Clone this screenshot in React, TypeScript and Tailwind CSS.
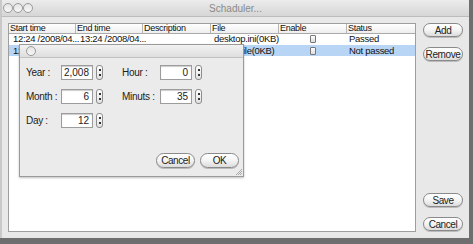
import React from "react";

const font = { fontFamily: '"Liberation Sans", Arial, sans-serif' };

function Pill({ label, className = "" }: { label: string; className?: string }) {
  return (
    <div
      className={`flex items-center justify-center whitespace-nowrap rounded-full border border-[#8a8a8a] bg-gradient-to-b from-white via-[#f4f4f4] to-[#dcdcdc] text-[10px] tracking-[-0.4px] text-[#222] shadow-[0_1px_0_#bbb] ${className}`}
    >
      {label}
    </div>
  );
}

function Light() {
  return (
    <div className="h-[10px] w-[10px] rounded-full border border-[#9a9a9a] bg-gradient-to-b from-[#e4e4e4] to-[#f8f8f8]" />
  );
}

function Spinner() {
  return (
    <div className="flex h-[15px] w-[7px] flex-col items-center justify-center gap-[3px] rounded-[3px] border border-[#8c8c8c] bg-gradient-to-b from-white to-[#e2e2e2]">
      <div className="h-[2px] w-[2px] bg-[#333]" />
      <div className="h-[2px] w-[2px] bg-[#333]" />
    </div>
  );
}

function Field({ label, value, labelW }: { label: string; value: string; labelW: string }) {
  return (
    <div className="flex items-center">
      <span className={`${labelW} whitespace-nowrap text-[10px] tracking-[-0.3px] text-[#222]`}>{label}</span>
      <div className="flex h-[15px] w-[32px] items-center justify-end border border-[#9c9c9c] bg-white pr-[3px] text-[10px] text-[#222] shadow-[inset_0_1px_1px_#ccc]">
        {value}
      </div>
      <div className="ml-[3px]">
        <Spinner />
      </div>
    </div>
  );
}

const cols = ["Start time", "End time", "Description", "File", "Enable", "Status"];
const grid = "grid grid-cols-[67px_67px_68px_68px_68px_1fr]";

function Check() {
  return (
    <div className="mx-auto h-[8px] w-[6px] rounded-[1px] border border-[#777] bg-gradient-to-b from-white to-[#ddd]" />
  );
}

function Cell({ children, className = "" }: { children?: React.ReactNode; className?: string }) {
  return <div className={`whitespace-nowrap ${className}`}>{children}</div>;
}

export default function App() {
  return (
    <div className="flex h-[244px] w-[473px] bg-[#6e6e6e]" style={font}>
      <div className="flex h-[238px] w-[469px] flex-col border-l-2 border-[#c9c9c9] bg-[#e8e8e8]">
        <div className="relative flex h-[17px] items-center border-b border-[#bcbcbc] bg-gradient-to-b from-[#ececec] to-[#d6d6d6] pl-[1px]">
          <Light />
          <Light />
          <Light />
          <span className="absolute left-0 right-0 text-center text-[10px] text-[#8a8a8a]">Schaduler...</span>
        </div>

        <div className="relative flex flex-1">
          <div className="ml-[6px] mt-[6px] h-[209px] w-[408px] border border-[#9e9e9e] bg-white text-[#111]">
            <div className={`${grid} h-[10px] border-b border-[#aaa] bg-gradient-to-b from-white to-[#eeeeee] text-[9px] tracking-[-0.3px]`}>
              {cols.map((c, i) => (
                <Cell key={c} className={`pl-[1px] leading-[9px] ${i < 5 ? "border-r border-[#b5b5b5]" : ""}`}>
                  {c}
                </Cell>
              ))}
            </div>
            <div className={`${grid} h-[10px] items-center text-[9.5px] leading-[10px] tracking-[-0.3px]`}>
              <Cell className="pl-[4px]">12:24 /2008/04...</Cell>
              <Cell className="pl-[4px]">13:24 /2008/04...</Cell>
              <Cell />
              <Cell className="pl-[3px]">desktop.ini(0KB)</Cell>
              <Check />
              <Cell className="pl-[2px]">Passed</Cell>
            </div>
            <div className={`${grid} mt-[1px] h-[11px] items-center bg-[#b9d5f6] text-[9.5px] leading-[11px] tracking-[-0.3px]`}>
              <Cell className="pl-[4px]">12:24 /2008/06...</Cell>
              <Cell className="pl-[4px]">13:24 /2008/06...</Cell>
              <Cell />
              <Cell className="pl-[3px]">image.file(0KB)</Cell>
              <Check />
              <Cell className="pl-[2px]">Not passed</Cell>
            </div>
          </div>

          <div className="ml-[7px] mt-[6px] flex w-[40px] flex-col">
            <Pill label="Add" className="h-[14px]" />
            <Pill label="Remove" className="mt-[10px] h-[14px]" />
            <div className="flex-1" />
            <Pill label="Save" className="h-[14px]" />
            <Pill label="Cancel" className="mb-[7px] mt-[10px] h-[14px]" />
          </div>

          <div className="absolute left-[17px] top-[27px] flex h-[133px] w-[225px] flex-col border border-[#9a9a9a] bg-[#ebebeb] shadow-[0_1px_2px_rgba(0,0,0,0.25)]">
            <div className="flex h-[13px] items-center border-b border-[#c2c2c2] bg-gradient-to-b from-[#f2f2f2] to-[#dedede] pl-[6px]">
              <Light />
            </div>
            <div className="relative flex flex-1 flex-col pl-[6px] pt-[7px]">
              <div className="flex">
                <div className="flex flex-col gap-[9px]">
                  <Field label="Year :" value="2,008" labelW="w-[35px]" />
                  <Field label="Month :" value="6" labelW="w-[35px]" />
                  <Field label="Day :" value="12" labelW="w-[35px]" />
                </div>
                <div className="ml-[19px] flex flex-col gap-[9px]">
                  <Field label="Hour :" value="0" labelW="w-[38px]" />
                  <Field label="Minuts :" value="35" labelW="w-[38px]" />
                </div>
              </div>
              <div className="mt-[25px] flex justify-end gap-[5px] pr-[4px]">
                <Pill label="Cancel" className="h-[15px] w-[39px]" />
                <Pill label="OK" className="h-[15px] w-[39px]" />
              </div>
              <svg className="absolute bottom-[1px] right-[1px]" width="6" height="6" viewBox="0 0 6 6">
                <path d="M6 0L0 6M6 2L2 6M6 4L4 6" stroke="#999" strokeWidth="0.8" />
              </svg>
            </div>
          </div>
        </div>
      </div>
    </div>
  );
}
